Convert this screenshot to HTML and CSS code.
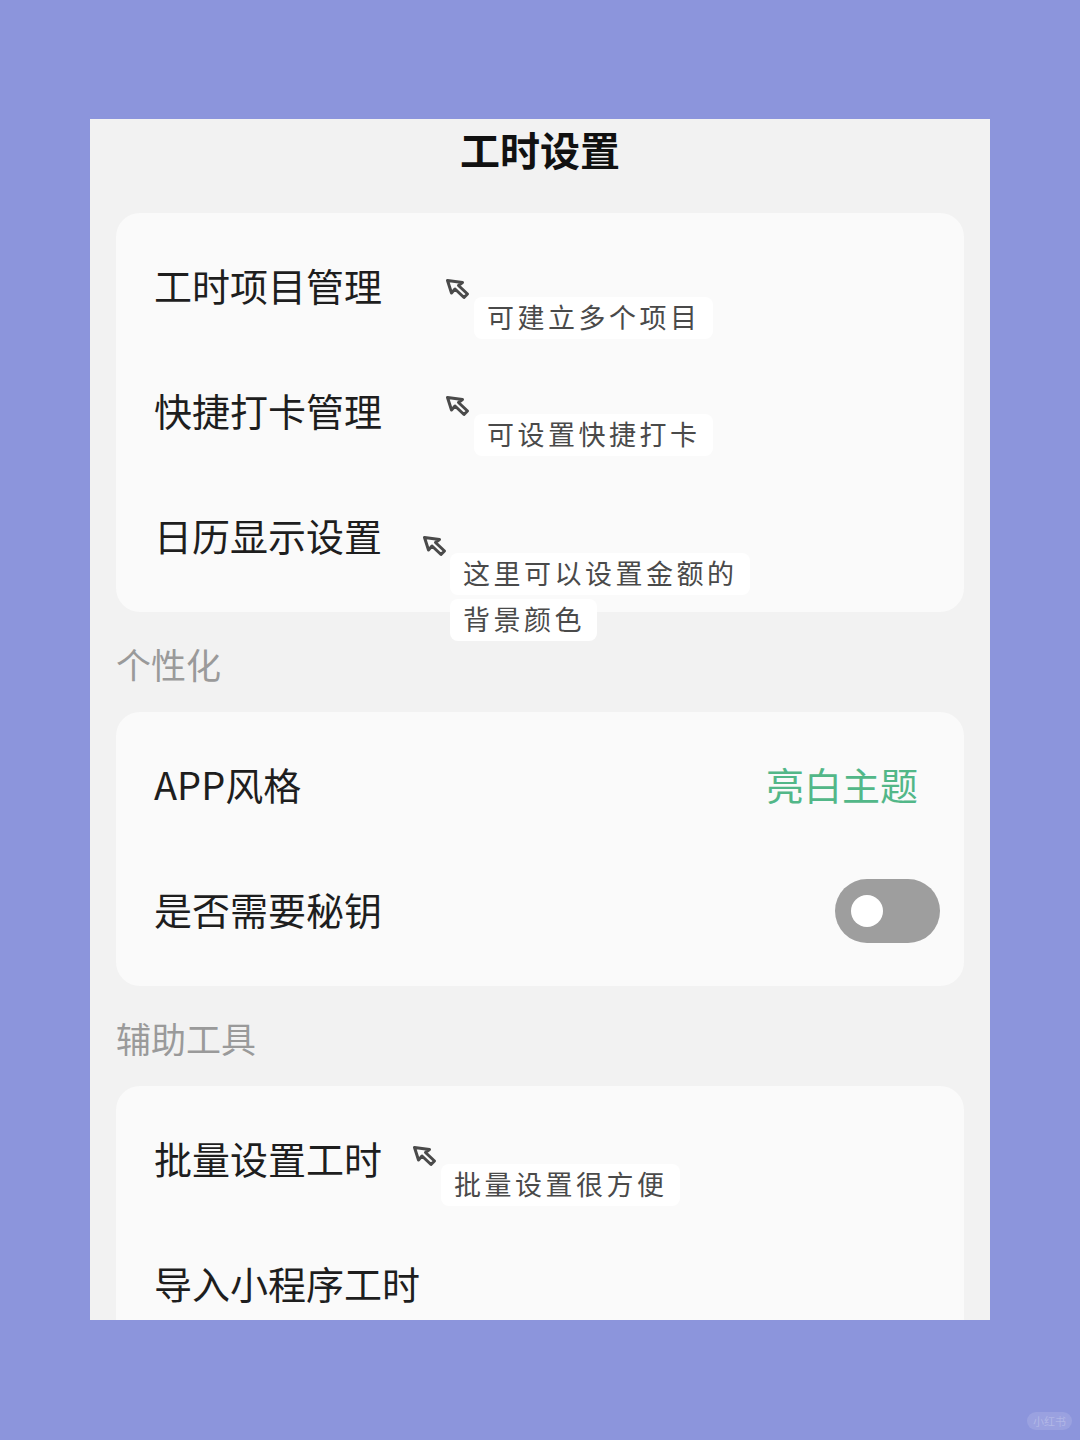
FILE: index.html
```html
<!DOCTYPE html>
<html lang="zh-CN">
<head>
  <meta charset="UTF-8">
  <meta name="viewport" content="width=device-width, initial-scale=1.0">
  <title>工时设置</title>
  <link rel="stylesheet" href="styles.css">
</head>
<body>
  <div class="screen">
    <div class="title">工时设置</div>

    <div class="card">
      <div class="row">
        <span class="label">工时项目管理</span>
        <div class="note note-project">
          <svg class="arrow" viewBox="0 0 26 22"><path d="M2.5 2.5 L6.5 15 L10 11 L19 19.5 L22.5 16 L13.5 7.5 L17.5 4.5 Z"/></svg>
          <div class="note-lines"><span class="note-text">可建立多个项目</span></div>
        </div>
      </div>
      <div class="row">
        <span class="label">快捷打卡管理</span>
        <div class="note note-punch">
          <svg class="arrow" viewBox="0 0 26 22"><path d="M2.5 2.5 L6.5 15 L10 11 L19 19.5 L22.5 16 L13.5 7.5 L17.5 4.5 Z"/></svg>
          <div class="note-lines"><span class="note-text">可设置快捷打卡</span></div>
        </div>
      </div>
      <div class="row">
        <span class="label">日历显示设置</span>
        <div class="note note-calendar">
          <svg class="arrow" viewBox="0 0 26 22"><path d="M2.5 2.5 L6.5 15 L10 11 L19 19.5 L22.5 16 L13.5 7.5 L17.5 4.5 Z"/></svg>
          <div class="note-lines">
            <span class="note-text">这里可以设置金额的</span>
            <span class="note-text">背景颜色</span>
          </div>
        </div>
      </div>
    </div>

    <div class="section">个性化</div>
    <div class="card">
      <div class="row">
        <span class="label">APP风格</span>
        <span class="value">亮白主题</span>
      </div>
      <div class="row">
        <span class="label">是否需要秘钥</span>
        <div class="switch"><div class="knob"></div></div>
      </div>
    </div>

    <div class="section">辅助工具</div>
    <div class="card">
      <div class="row">
        <span class="label">批量设置工时</span>
        <div class="note note-batch">
          <svg class="arrow" viewBox="0 0 26 22"><path d="M2.5 2.5 L6.5 15 L10 11 L19 19.5 L22.5 16 L13.5 7.5 L17.5 4.5 Z"/></svg>
          <div class="note-lines"><span class="note-text">批量设置很方便</span></div>
        </div>
      </div>
      <div class="row">
        <span class="label">导入小程序工时</span>
      </div>
    </div>
  </div>

  <span class="mark">小红书</span>
</body>
</html>
```

FILE: styles.css
```css
body {
  margin: 0;
  font-family: "Noto Sans CJK SC", "Noto Sans", sans-serif;
  background-color: #8c95dc;
  color: #1e1e1e;
  height: 1440px;
  overflow: hidden;
  position: relative;
}
.screen {
  margin: 119px 0 0 90px;
  width: 900px;
  height: 1201px;
  box-sizing: border-box;
  padding: 0 26px;
  background-color: #f2f2f2;
  overflow: hidden;
}
.title {
  height: 60px;
  line-height: 60px;
  margin-bottom: 34px;
  text-align: center;
  font-size: 40px;
  font-weight: bold;
  color: #111;
}
.card {
  background-color: #fafafa;
  border-radius: 24px;
  padding: 9px 0 15px;
}
.row {
  position: relative;
  height: 125px;
  display: flex;
  align-items: center;
  justify-content: space-between;
  padding: 0 46px 0 38px;
}
.label {
  font-size: 38px;
  color: #1e1e1e;
}
.value {
  font-size: 38px;
  color: #52b788;
}
.section {
  height: 90px;
  line-height: 90px;
  padding: 7px 0 3px;
  font-size: 35px;
  color: #9a9a9a;
}
.switch {
  width: 105px;
  height: 64px;
  margin: 4px -22px 0 0;
  border-radius: 32px;
  background-color: #9e9e9e;
  display: flex;
  align-items: center;
  padding-left: 16px;
  box-sizing: border-box;
}
.knob {
  width: 32px;
  height: 32px;
  border-radius: 50%;
  background-color: #fff;
}

/* hand-drawn callouts */
.note {
  position: absolute;
  display: flex;
  align-items: flex-start;
}
.note-project { left: 329px; top: 56px; }
.note-punch { left: 329px; top: 48px; }
.note-calendar { left: 306px; top: 63px; }
.note-batch { left: 296px; top: 50px; }
.arrow {
  width: 26px;
  height: 22px;
  fill: none;
  stroke: #4a4a4a;
  stroke-width: 3;
  stroke-linejoin: round;
}
.note-lines {
  display: flex;
  flex-direction: column;
  align-items: flex-start;
  gap: 4px;
  margin: 19px 0 0 3px;
}
.note-calendar .note-lines {
  margin-top: 18px;
  margin-left: 2px;
}
.note-text {
  background-color: #fff;
  border-radius: 8px;
  padding: 0 12px 0 13px;
  height: 42px;
  line-height: 40px;
  font-size: 27px;
  letter-spacing: 3.5px;
  color: #4a4a4a;
}
.mark {
  position: absolute;
  right: 8px;
  bottom: 10px;
  padding: 0 6px;
  border-radius: 10px;
  background-color: rgba(255, 255, 255, 0.12);
  color: rgba(255, 255, 255, 0.25);
  font-size: 11px;
  line-height: 18px;
}
```
